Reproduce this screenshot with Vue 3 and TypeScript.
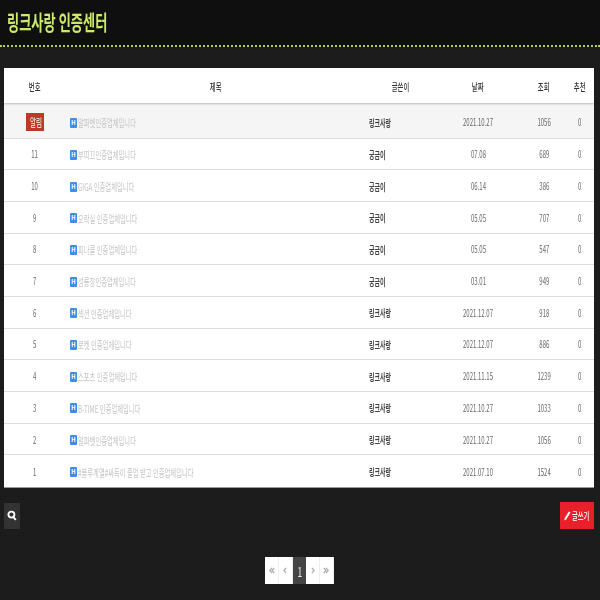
<template>
  <div class="page">
    <header class="top">
      <h1 class="logo"><span class="sq left">링크사랑 인증센터</span></h1>
    </header>

    <main class="content">
      <section class="board">
        <div class="row head">
          <div class="cell"><span class="sq">번호</span></div>
          <div class="cell"><span class="sq">제목</span></div>
          <div class="cell"><span class="sq">글쓴이</span></div>
          <div class="cell"><span class="sq">날짜</span></div>
          <div class="cell"><span class="sq">조회</span></div>
          <div class="cell"><span class="sq">추천</span></div>
        </div>
        <div v-for="post in posts" :key="post.no" class="row item" :class="{ notice: post.no === '알림' }">
          <div class="cell num">
            <span v-if="post.no === '알림'" class="badge"><span class="sq">알림</span></span>
            <span v-else class="sq">{{ post.no }}</span>
          </div>
          <div class="cell subject">
            <i class="mark">H</i>
            <span class="sq left">{{ post.title }}</span>
          </div>
          <div class="cell author"><span class="sq left">{{ post.author }}</span></div>
          <div class="cell num"><span class="sq">{{ post.date }}</span></div>
          <div class="cell num"><span class="sq">{{ post.hits }}</span></div>
          <div class="cell num"><span class="sq">0</span></div>
        </div>
      </section>

      <div class="tools">
        <button class="search" type="button" aria-label="검색">
          <svg width="10" height="11" viewBox="0 0 10 11">
            <circle cx="4.4" cy="4.6" r="3" fill="none" stroke="#fff" stroke-width="1.9" />
            <path d="M6.4 7l2.4 3" stroke="#fff" stroke-width="2" />
          </svg>
        </button>
        <button class="write" type="button">
          <svg width="7" height="10" viewBox="0 0 7 10">
            <path d="M4.8.6l1.7 1L2.2 8.6.4 9.6l.1-2z" fill="#fff" />
          </svg>
          <span class="sq left">글쓰기</span>
        </button>
      </div>

      <nav class="pager">
        <a v-for="p in pages" :key="p.key" :class="{ on: p.key === 'cur' }">
          <span v-if="p.key === 'cur'" class="sq">1</span>
          <svg v-else width="6" height="7" viewBox="0 0 8 9">
            <path v-for="d in p.paths" :key="d" :d="d" fill="none" stroke="#aaa" stroke-width="1.6" />
          </svg>
        </a>
      </nav>
    </main>
  </div>
</template>

<script setup lang="ts">
interface Post {
  no: string
  title: string
  author: string
  date: string
  hits: number
}

const posts: Post[] = [
  { no: '알림', title: '알파벳인증업체입니다', author: '링크사랑', date: '2021.10.27', hits: 1056 },
  { no: '11', title: '부띠끄인증업체입니다', author: '궁금이', date: '07.08', hits: 689 },
  { no: '10', title: 'GIGA 인증업체입니다', author: '궁금이', date: '06.14', hits: 386 },
  { no: '9', title: '오락실 인증업체입니다', author: '궁금이', date: '05.05', hits: 707 },
  { no: '8', title: '피나클 인증업체입니다', author: '궁금이', date: '05.05', hits: 547 },
  { no: '7', title: '성룡장인증업체입니다', author: '궁금이', date: '03.01', hits: 949 },
  { no: '6', title: '섹션 인증업체입니다', author: '링크사랑', date: '2021.12.07', hits: 918 },
  { no: '5', title: '로켓 인증업체입니다', author: '링크사랑', date: '2021.12.07', hits: 886 },
  { no: '4', title: '스포츠 인증업체입니다', author: '링크사랑', date: '2021.11.15', hits: 1239 },
  { no: '3', title: 'B-TIME 인증업체입니다', author: '링크사랑', date: '2021.10.27', hits: 1033 },
  { no: '2', title: '알파벳인증업체입니다', author: '링크사랑', date: '2021.10.27', hits: 1056 },
  { no: '1', title: '#블루계열#싸독이 졸업 받고 인증업체입니다', author: '링크사랑', date: '2021.07.10', hits: 1524 },
]

const pages = [
  { key: 'first', paths: ['M4 1L1 4.5 4 8', 'M7 1L4 4.5 7 8'] },
  { key: 'prev', paths: ['M5.5 1L2.5 4.5 5.5 8'] },
  { key: 'cur', paths: [] as string[] },
  { key: 'next', paths: ['M2.5 1L5.5 4.5 2.5 8'] },
  { key: 'last', paths: ['M1 1L4 4.5 1 8', 'M4 1L7 4.5 4 8'] },
]
</script>

<style scoped>
.page {
  width: 600px;
  height: 600px;
  overflow: hidden;
  background: #1c1c1c;
  font-family: "Noto Sans CJK KR", "Noto Sans", sans-serif;
  filter: blur(0.35px);
}

.top {
  height: 45px;
  background: #0f0f0f;
  border-bottom: 2px dotted #b5cf62;
  display: flex;
  align-items: center;
  padding-left: 7px;
}

.logo {
  margin: 0;
  font-size: 21px;
  font-weight: 700;
  color: #cbe96a;
  line-height: 1;
  padding-bottom: 2px;
}

.logo .sq {
  transform: scaleX(0.63);
}

.sq {
  display: inline-block;
  white-space: nowrap;
  transform: scaleX(0.6);
}

.sq.left {
  transform-origin: left center;
}

.content {
  padding: 21px 6px 0 4px;
}

.board {
  background: #fff;
  border-bottom: 1px solid #999;
}

.row {
  display: grid;
  grid-template-columns: 62px 300px 68px 88px 44px 28px;
  align-items: center;
}

.head {
  height: 35px;
  padding-top: 2px;
  box-sizing: border-box;
  font-size: 10.5px;
  font-weight: 500;
  color: #333;
  box-shadow: 0 1px 2px rgba(0, 0, 0, 0.25);
  position: relative;
}

.item {
  height: 31.7px;
  box-sizing: border-box;
  border-bottom: 1px solid #ddd;
  font-size: 10px;
  color: #666;
}

.item:last-child {
  border-bottom: 0;
}

.notice {
  height: 35.5px;
  padding-top: 3px;
  background: #f5f5f5;
}

.cell {
  text-align: center;
  white-space: nowrap;
  overflow: hidden;
}

.subject {
  display: flex;
  align-items: center;
  gap: 1px;
  padding: 2px 0 0 4px;
  text-align: left;
  color: #c4c4c4;
  font-size: 10.5px;
}

.mark {
  flex: none;
  width: 7px;
  height: 10px;
  border-radius: 1px;
  background: #3b8fe8;
  color: #fff;
  font-size: 6px;
  font-style: normal;
  font-weight: 700;
  line-height: 10px;
  text-align: center;
}

.author {
  padding: 1px 0 0 3px;
  text-align: left;
  font-weight: 700;
  color: #444;
}

.badge {
  display: inline-block;
  width: 18px;
  height: 18px;
  background: #b83b26;
  color: #fff;
  font-size: 11px;
  line-height: 18px;
  vertical-align: middle;
}

.tools {
  display: flex;
  justify-content: space-between;
  align-items: center;
  margin-top: 14px;
}

.search {
  width: 16px;
  height: 26px;
  padding: 0;
  border: 0;
  background: #333;
  display: flex;
  align-items: center;
  justify-content: center;
}

.write {
  width: 34px;
  height: 27px;
  padding: 0 0 0 4px;
  border: 0;
  background: #e8202a;
  color: #fff;
  font-family: inherit;
  font-size: 10.5px;
  font-weight: 500;
  display: flex;
  align-items: center;
  gap: 1px;
  overflow: hidden;
}

.write svg {
  flex: none;
}

.pager {
  display: flex;
  justify-content: center;
  margin-top: 28px;
  margin-right: -1px;
}

.pager a {
  width: 13.7px;
  height: 27px;
  background: #fff;
  border-right: 1px solid #eee;
  box-sizing: border-box;
  display: flex;
  align-items: center;
  justify-content: center;
  font-size: 14px;
  overflow: hidden;
}

.pager a.on {
  background: #444;
  border-right: 0;
  color: #eee;
}
</style>

<style>
html, body {
  background: #1c1c1c;
}
</style>
